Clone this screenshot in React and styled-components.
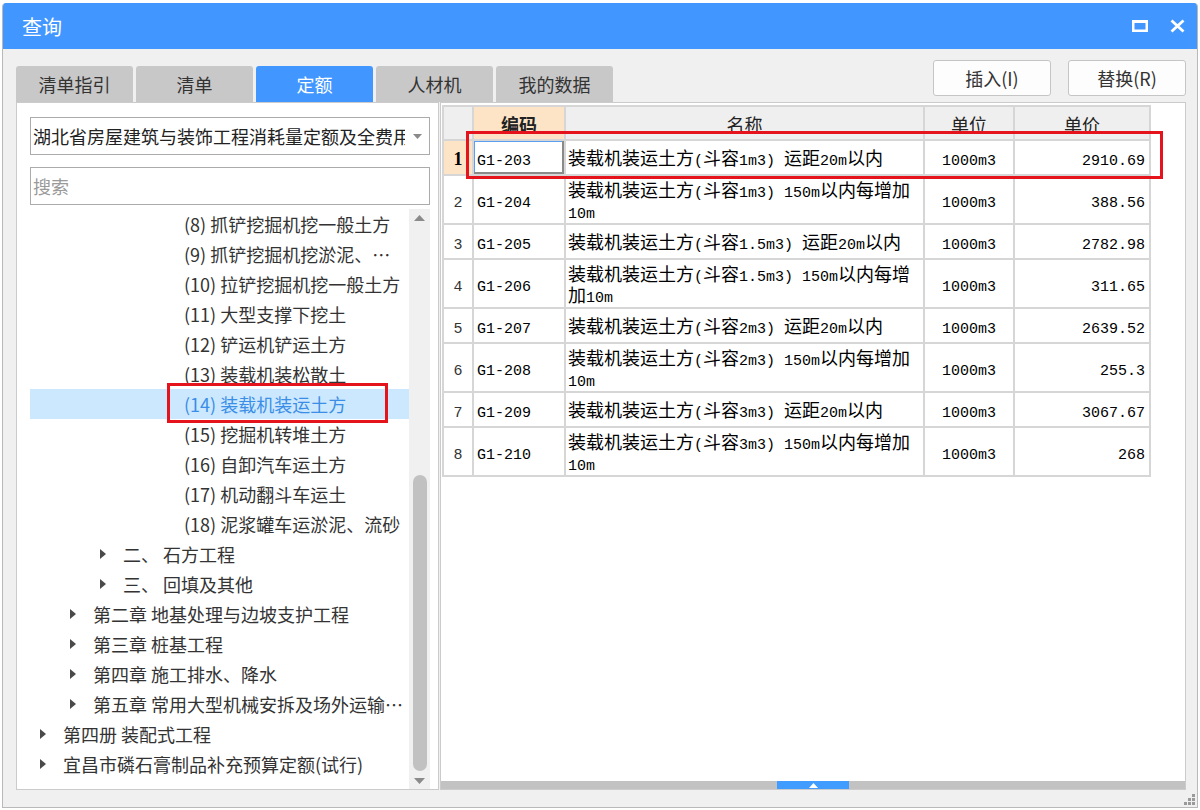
import React from "react";
import styled, { createGlobalStyle } from "styled-components";

const GlobalStyle = createGlobalStyle`
  html, body {
    margin: 0;
    padding: 0;
    background: #fff;
  }
  body {
    width: 1200px;
    height: 810px;
    overflow: hidden;
    font-family: "Noto Sans CJK SC", "Noto Sans", sans-serif;
  }
  * {
    box-sizing: border-box;
  }
`;

const Screen = styled.div`
  width: 1200px;
  height: 810px;
  padding: 3px 2px 2px 2px;
  background: #fff;
`;

const Window = styled.div`
  position: relative;
  height: 100%;
  display: flex;
  flex-direction: column;
  background: #f0f0f0;
  border: 1px solid #b9b9b9;
  border-top: none;
  border-radius: 4px 4px 0 0;
  overflow: hidden;
`;

const TitleBar = styled.div`
  height: 46px;
  flex-shrink: 0;
  display: flex;
  align-items: center;
  justify-content: space-between;
  padding: 0 12px 0 19px;
  background: #4197ff;
  color: #fff;
  font-size: 20px;
`;

const TitleControls = styled.div`
  display: flex;
  align-items: center;
  gap: 22px;
`;

const Body = styled.div`
  flex: 1;
  display: flex;
  flex-direction: column;
  padding: 11px 11px 17px 13px;
  min-height: 0;
`;

const TopRow = styled.div`
  height: 42px;
  flex-shrink: 0;
  display: flex;
  justify-content: space-between;
`;

const Tabs = styled.div`
  display: flex;
  gap: 3px;
  align-self: flex-end;
`;

const Tab = styled.div`
  width: 117px;
  height: 36px;
  display: flex;
  align-items: center;
  justify-content: center;
  border-radius: 3px 3px 0 0;
  font-size: 18px;
  color: ${({ $active }) => ($active ? "#fff" : "#333")};
  background: ${({ $active }) => ($active ? "#4197ff" : "#c8c8c8")};
`;

const Actions = styled.div`
  display: flex;
  gap: 17px;
  align-self: flex-start;
`;

const Button = styled.div`
  width: 118px;
  height: 36px;
  display: flex;
  align-items: center;
  justify-content: center;
  background: #fdfdfd;
  border: 1px solid #c5c5c5;
  border-radius: 3px;
  font-size: 18px;
  color: #333;
`;

const Panels = styled.div`
  flex: 1;
  display: flex;
  gap: 1px;
  min-height: 0;
`;

const LeftPanel = styled.div`
  width: 423px;
  flex-shrink: 0;
  display: flex;
  flex-direction: column;
  background: #fff;
  border: 1px solid #cbcbcb;
  padding: 14px 8px 0 13px;
`;

const Select = styled.div`
  height: 38px;
  flex-shrink: 0;
  display: flex;
  align-items: center;
  border: 1px solid #ababab;
  padding-left: 2px;
  font-size: 18px;
  color: #222;
`;

const SelectText = styled.div`
  flex: 1;
  overflow: hidden;
  white-space: nowrap;
`;

const SelectArrow = styled.div`
  width: 24px;
  display: flex;
  justify-content: center;
`;

const Search = styled.input`
  height: 38px;
  flex-shrink: 0;
  margin-top: 12px;
  border: 1px solid #ababab;
  padding: 0 0 0 2px;
  font-family: "Noto Sans CJK SC", sans-serif;
  font-size: 18px;
  color: #222;
  outline: none;
  &::placeholder {
    color: #9a9a9a;
  }
`;

const TreeArea = styled.div`
  flex: 1;
  display: flex;
  margin-top: 4px;
  min-height: 0;
`;

const TreeList = styled.div`
  flex: 1;
  min-width: 0;
  overflow: hidden;
`;

const TreeRow = styled.div`
  position: relative;
  height: 30px;
  display: flex;
  align-items: center;
  padding-left: ${({ $indent }) => $indent}px;
  padding-right: 4px;
  font-size: 18px;
  white-space: nowrap;
  color: ${({ $selected }) => ($selected ? "#3a8ee6" : "#333")};
  background: ${({ $selected }) => ($selected ? "#cce8ff" : "transparent")};
`;

const Caret = styled.span`
  width: 23px;
  flex-shrink: 0;
  display: flex;
  align-items: center;
`;

const TreeLabel = styled.span`
  min-width: 0;
  overflow: hidden;
  text-overflow: ellipsis;
`;

const Mark = styled.div`
  position: absolute;
  left: ${({ $left }) => $left}px;
  top: ${({ $top }) => $top}px;
  width: ${({ $width }) => $width}px;
  height: ${({ $height }) => $height}px;
  border: 3px solid #e5141c;
  pointer-events: none;
`;

const ScrollTrack = styled.div`
  width: 21px;
  flex-shrink: 0;
  display: flex;
  flex-direction: column;
  align-items: center;
  background: #f0f0f0;
`;

const ScrollArrow = styled.div`
  height: 17px;
  display: flex;
  align-items: center;
  justify-content: center;
`;

const ThumbSpace = styled.div`
  flex: 1;
  display: flex;
  flex-direction: column;
  justify-content: flex-end;
`;

const Thumb = styled.div`
  width: 14px;
  height: 296px;
  margin-bottom: 1px;
  border-radius: 7px;
  background: #c1c1c1;
`;

const RightPanel = styled.div`
  flex: 1;
  min-width: 0;
  display: flex;
  flex-direction: column;
  background: #fff;
  border: 1px solid #cbcbcb;
`;

const TableArea = styled.div`
  flex: 1;
  padding: 2px 0 0 1px;
  min-height: 0;
`;

const TableWrap = styled.div`
  position: relative;
  width: 707px;
`;

const Grid = styled.table`
  width: 707px;
  table-layout: fixed;
  border-collapse: collapse;
  font-family: "Noto Sans CJK SC", sans-serif;
  font-size: 18px;
  line-height: 21px;
  color: #000;
`;

const Th = styled.th`
  height: 34px;
  padding: 2px 0 0;
  border: 2px solid #d6d6d6;
  font-weight: ${({ $strong }) => ($strong ? 700 : 400)};
  color: #222;
  background: ${({ $hot }) => ($hot ? "#fde4c7" : "#efefef")};
`;

const Tr = styled.tr`
  height: ${({ $tall }) => ($tall ? 49 : 35)}px;
`;

const Td = styled.td`
  padding: 0 ${({ $pr }) => $pr || 0}px 0 ${({ $pl }) => $pl || 0}px;
  border: 2px solid #d6d6d6;
  vertical-align: middle;
  white-space: pre;
  overflow: hidden;
  text-align: ${({ $align }) => $align || "left"};
  background: ${({ $hot }) => ($hot ? "#fde4c7" : "#fff")};
  box-shadow: ${({ $editing }) =>
    $editing ? "inset -2px -2px 0 #8a8a8a, inset 1px 1px 0 #5c9fef" : "none"};
`;

const RowNum = styled.span`
  font-family: ${({ $first }) =>
    $first ? '"Liberation Serif", serif' : '"Liberation Mono", monospace'};
  font-size: ${({ $first }) => ($first ? 18 : 15)}px;
  font-weight: ${({ $first }) => ($first ? 700 : 400)};
  line-height: 1;
  color: ${({ $first }) => ($first ? "#000" : "#333")};
`;

const Half = styled.span`
  font-family: "Liberation Mono", monospace;
  font-size: 15px;
  line-height: 1;
`;

const Line = styled.div`
  height: 21px;
  line-height: 21px;
  white-space: pre;
`;

const Splitter = styled.div`
  height: 8px;
  flex-shrink: 0;
  display: flex;
  justify-content: center;
  background: #c2c2c2;
`;

const SplitHandle = styled.div`
  width: 72px;
  display: flex;
  align-items: center;
  justify-content: center;
  background: #409cff;
`;

const Grip = styled.svg`
  position: absolute;
  right: 2px;
  bottom: 2px;
`;

const tabs = ["清单指引", "清单", "定额", "人材机", "我的数据"];

const tree = [
  { label: "(8) 抓铲挖掘机挖一般土方", indent: 154 },
  { label: "(9) 抓铲挖掘机挖淤泥、流砂", indent: 154 },
  { label: "(10) 拉铲挖掘机挖一般土方", indent: 154 },
  { label: "(11) 大型支撑下挖土", indent: 154 },
  { label: "(12) 铲运机铲运土方", indent: 154 },
  { label: "(13) 装载机装松散土", indent: 154 },
  { label: "(14) 装载机装运土方", indent: 154, selected: true },
  { label: "(15) 挖掘机转堆土方", indent: 154 },
  { label: "(16) 自卸汽车运土方", indent: 154 },
  { label: "(17) 机动翻斗车运土", indent: 154 },
  { label: "(18) 泥浆罐车运淤泥、流砂", indent: 154 },
  { label: "二、 石方工程", indent: 70, folder: true },
  { label: "三、 回填及其他", indent: 70, folder: true },
  { label: "第二章 地基处理与边坡支护工程", indent: 40, folder: true },
  { label: "第三章 桩基工程", indent: 40, folder: true },
  { label: "第四章 施工排水、降水", indent: 40, folder: true },
  { label: "第五章 常用大型机械安拆及场外运输费用", indent: 40, folder: true },
  { label: "第四册 装配式工程", indent: 10, folder: true },
  { label: "宜昌市磷石膏制品补充预算定额(试行)", indent: 10, folder: true },
];

const rows = [
  { code: "G1-203", name: "装载机装运土方(斗容1m3) 运距20m以内", price: "2910.69" },
  { code: "G1-204", name: "装载机装运土方(斗容1m3) 150m以内每增加\n10m", price: "388.56" },
  { code: "G1-205", name: "装载机装运土方(斗容1.5m3) 运距20m以内", price: "2782.98" },
  { code: "G1-206", name: "装载机装运土方(斗容1.5m3) 150m以内每增\n加10m", price: "311.65" },
  { code: "G1-207", name: "装载机装运土方(斗容2m3) 运距20m以内", price: "2639.52" },
  { code: "G1-208", name: "装载机装运土方(斗容2m3) 150m以内每增加\n10m", price: "255.3" },
  { code: "G1-209", name: "装载机装运土方(斗容3m3) 运距20m以内", price: "3067.67" },
  { code: "G1-210", name: "装载机装运土方(斗容3m3) 150m以内每增加\n10m", price: "268" },
];

// ascii runs are drawn half-width, like the song-style bitmap font of the grid
const Mixed = ({ text }) =>
  text
    .split(/([\x20-\x7e]+)/)
    .filter(Boolean)
    .map((part, i) =>
      /[\x20-\x7e]/.test(part) ? <Half key={i}>{part}</Half> : <span key={i}>{part}</span>
    );

const Triangle = ({ dir = "right", color = "#555", w = 7, h = 11 }) => {
  const points = {
    right: `0,0 ${w},${h / 2} 0,${h}`,
    up: `0,${h} ${w / 2},0 ${w},${h}`,
    down: `0,0 ${w},0 ${w / 2},${h}`,
  }[dir];
  return (
    <svg width={w} height={h} viewBox={`0 0 ${w} ${h}`}>
      <polygon points={points} fill={color} />
    </svg>
  );
};

const App = () => {
  return (
    <Screen>
      <GlobalStyle />
      <Window>
        <TitleBar>
          <span>查询</span>
          <TitleControls>
            <svg width="16" height="12" viewBox="0 0 16 12">
              <rect x="1.25" y="1.5" width="13.5" height="9.25" fill="none" stroke="#fff" strokeWidth="2.5" />
              <rect x="0" y="0" width="16" height="3" fill="#fff" />
            </svg>
            <svg width="15" height="14" viewBox="0 0 15 14">
              <path d="M1.5 1.5 L13.5 12.5 M13.5 1.5 L1.5 12.5" stroke="#fff" strokeWidth="2.8" />
            </svg>
          </TitleControls>
        </TitleBar>

        <Body>
          <TopRow>
            <Tabs>
              {tabs.map((t) => (
                <Tab key={t} $active={t === "定额"}>
                  {t}
                </Tab>
              ))}
            </Tabs>
            <Actions>
              <Button>插入(I)</Button>
              <Button>替换(R)</Button>
            </Actions>
          </TopRow>

          <Panels>
            <LeftPanel>
              <Select>
                <SelectText>湖北省房屋建筑与装饰工程消耗量定额及全费用基价表</SelectText>
                <SelectArrow>
                  <Triangle dir="down" color="#8a8a8a" w={9} h={5} />
                </SelectArrow>
              </Select>
              <Search placeholder="搜索" readOnly />
              <TreeArea>
                <TreeList>
                  {tree.map((item) => (
                    <TreeRow key={item.label} $indent={item.indent} $selected={item.selected}>
                      {item.folder && (
                        <Caret>
                          <Triangle dir="right" color="#4a4a4a" w={6} h={10} />
                        </Caret>
                      )}
                      <TreeLabel>{item.label}</TreeLabel>
                      {item.selected && <Mark $left={137} $top={-6} $width={221} $height={40} />}
                    </TreeRow>
                  ))}
                </TreeList>
                <ScrollTrack>
                  <ScrollArrow>
                    <Triangle dir="up" color="#8a8a8a" w={11} h={6} />
                  </ScrollArrow>
                  <ThumbSpace>
                    <Thumb />
                  </ThumbSpace>
                  <ScrollArrow>
                    <Triangle dir="down" color="#8a8a8a" w={11} h={6} />
                  </ScrollArrow>
                </ScrollTrack>
              </TreeArea>
            </LeftPanel>

            <RightPanel>
              <TableArea>
                <TableWrap>
                  <Grid>
                    <colgroup>
                      <col style={{ width: 30 }} />
                      <col style={{ width: 92 }} />
                      <col style={{ width: 359 }} />
                      <col style={{ width: 90 }} />
                      <col style={{ width: 136 }} />
                    </colgroup>
                    <thead>
                      <tr>
                        <Th />
                        <Th $hot $strong>编码</Th>
                        <Th>名称</Th>
                        <Th>单位</Th>
                        <Th>单价</Th>
                      </tr>
                    </thead>
                    <tbody>
                      {rows.map((r, i) => (
                        <Tr key={r.code} $tall={r.name.includes("\n")}>
                          <Td $align="center" $hot={i === 0}>
                            <RowNum $first={i === 0}>{i + 1}</RowNum>
                          </Td>
                          <Td $pl={3} $editing={i === 0}>
                            <Mixed text={r.code} />
                          </Td>
                          <Td $pl={2}>
                            {r.name.split("\n").map((line) => (
                              <Line key={line}>
                                <Mixed text={line} />
                              </Line>
                            ))}
                          </Td>
                          <Td $align="center">
                            <Mixed text="1000m3" />
                          </Td>
                          <Td $align="right" $pr={4}>
                            <Mixed text={r.price} />
                          </Td>
                        </Tr>
                      ))}
                    </tbody>
                  </Grid>
                  <Mark $left={24} $top={26} $width={697} $height={48} />
                </TableWrap>
              </TableArea>
              <Splitter>
                <SplitHandle>
                  <Triangle dir="up" color="#fff" w={9} h={5} />
                </SplitHandle>
              </Splitter>
            </RightPanel>
          </Panels>
        </Body>

        <Grip width="11" height="11" viewBox="0 0 11 11">
          {[
            [8, 0],
            [4, 4],
            [8, 4],
            [0, 8],
            [4, 8],
            [8, 8],
          ].map(([x, y]) => (
            <rect key={`${x}-${y}`} x={x} y={y} width="3" height="3" fill="#9a9a9a" />
          ))}
        </Grip>
      </Window>
    </Screen>
  );
};

export default App;
